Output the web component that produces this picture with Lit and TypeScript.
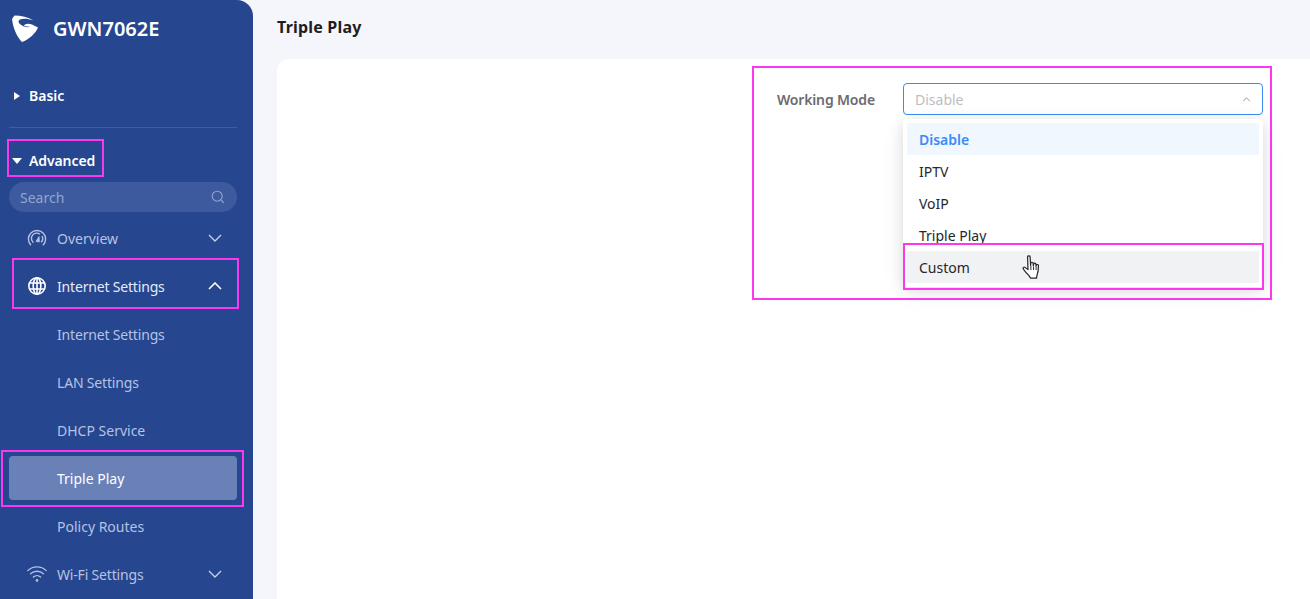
import { LitElement, html, css, svg } from "lit";
import { customElement } from "lit/decorators.js";

const chevDown = html`<svg class="chev" viewBox="0 0 14 8" width="14" height="8"><path d="M1 1l6 6 6-6" fill="none" stroke="currentColor" stroke-width="1.3"/></svg>`;
const chevUp = html`<svg class="chev up" viewBox="0 0 14 8" width="14" height="8"><path d="M1 7l6-6 6 6" fill="none" stroke="currentColor" stroke-width="1.6"/></svg>`;
const selChev = html`<svg class="chev" viewBox="0 0 10 6" width="9" height="5"><path d="M1 5l4-4 4 4" fill="none" stroke="currentColor" stroke-width="1.1"/></svg>`;

const gauge = html`<svg class="ico" viewBox="0 0 20 20" width="20" height="20" fill="none" stroke="currentColor" stroke-width="1.4">
  <path d="M4 17.2A8.6 8.6 0 1 1 16 17.2"/><path d="M6.5 14.6A5.2 5.2 0 0 1 13 6.2"/><path d="M15 8a5.2 5.2 0 0 1-.9 6.2"/><path d="M9 13.5l3-5 .4 5.4z" fill="currentColor" stroke-width=".8"/>
</svg>`;
const globe = html`<svg class="ico" viewBox="0 0 20 20" width="20" height="20" fill="none" stroke="currentColor" stroke-width="1.6">
  <circle cx="10" cy="10" r="8.2"/><ellipse cx="10" cy="10" rx="3.8" ry="8.2"/><path d="M2.4 7h15.2M2.4 13h15.2M10 1.8v16.4"/>
</svg>`;
const wifi = html`<svg class="ico" viewBox="0 0 20 20" width="20" height="20" fill="none" stroke="currentColor" stroke-width="1.3" stroke-linecap="round">
  <path d="M.8 6.6a13.4 13.4 0 0 1 18.4 0"/><path d="M3.6 9.8a9.3 9.3 0 0 1 12.8 0"/><path d="M6.4 13a5.2 5.2 0 0 1 7.2 0"/><circle cx="10" cy="16.4" r="1.3" fill="currentColor" stroke="none"/>
</svg>`;

const magnifier = html`<svg viewBox="0 0 14 14" width="14" height="14" fill="none" stroke="currentColor" stroke-width="1.1"><circle cx="6.2" cy="6.2" r="5"/><path d="M10 10l2.600 2.600" stroke-linecap="round"/></svg>`;

const logo = svg`<path d="M0 4L2.500 .5C9 .5 16 2 21.500 5.500 16 3.500 11 3 8 4.500 6 5.500 6 7.500 8.500 9.500 11 11.500 14 12.500 18.500 12L12 11C12.500 9 16 8 20 9.500L26 12.500C24 18 17 24.500 10 27 5 22 1 13 0 4Z" fill="#fff"/>`;

const hand = html`<svg class="hand" viewBox="0 0 18 25" width="20" height="25" preserveAspectRatio="none">
  <path d="M5 1.800c.1-1.200 2.200-1.200 2.300 0l.4 8.600.3-2.400c.2-1.100 1.900-1 2 .1l.2 2.600.4-1.900c.3-1 1.800-.9 1.900.2l.1 2.200.5-1.100c.4-.9 1.700-.6 1.700.4 0 3.200-.2 6.400-1 8.600-.4 1.200-.6 2.600-.7 4H7.600c-.6-2-2.300-3.600-3.900-5.500-1.100-1.300-2.100-2.800-2.700-4-.4-1 .8-1.900 1.700-1.200l2.700 2.300z" fill="#fff" stroke="#26262b" stroke-width="1.100" stroke-linejoin="round"/>
  <path d="M8 15v-4.200M10.400 15v-3.700M12.700 15v-3.200" stroke="#26262b" stroke-width=".9" fill="none"/>
</svg>`;

@customElement("app-root")
export class AppRoot extends LitElement {
  static styles = css`
    :host {
      display: flex;
      position: relative;
      width: 1310px;
      height: 599px;
      overflow: hidden;
      background: #f4f6fb;
      font-family: "Noto Sans", "Open Sans", sans-serif;
      font-size: 14px;
      color: #26262b;
    }
    .side {
      flex: 0 0 253px;
      box-sizing: border-box;
      background: #26468f;
      border-top-right-radius: 16px;
      padding: 0 16px 0 9px;
      color: #fff;
    }
    .brand {
      display: flex;
      align-items: center;
      gap: 15px;
      height: 56px;
      margin-left: 3px;
      padding-top: 1px;
      box-sizing: border-box;
    }
    .brand svg { flex: none; margin-right: -1px; }
    .brand span { font-size: 20px; font-weight: 600; line-height: 24px; }
    .group {
      display: flex;
      align-items: center;
      font-weight: 600;
      line-height: 20px;
      height: 20px;
    }
    .group.basic { margin-top: 30px; }
    .rule { height: 1px; background: #3c5ea6; margin-top: 21px; }
    .group.adv { margin-top: 23px; letter-spacing: -0.1px; }
    .tri-r {
      width: 0;
      height: 0;
      border-left: 6px solid #fff;
      border-top: 4.500px solid transparent;
      border-bottom: 4.500px solid transparent;
      margin: 0 9px 0 5px;
    }
    .tri-d {
      width: 0;
      height: 0;
      border-top: 6px solid #fff;
      border-left: 5px solid transparent;
      border-right: 5px solid transparent;
      margin: 0 7px 0 3px;
    }
    .search {
      display: flex;
      align-items: center;
      justify-content: space-between;
      height: 30px;
      margin-top: 11px;
      padding: 0 12px 0 11px;
      border-radius: 15px;
      background: #3e5a9e;
      color: #93a5cd;
    }
    .search svg { color: #93a5cd; }
    .nav { margin: 4px 0 0; padding: 0; list-style: none; }
    .row {
      display: flex;
      align-items: center;
      height: 44px;
      margin: 4px 0;
      padding: 0 15px 0 18px;
      border-radius: 4px;
      color: #b5c3e2;
    }
    .row:first-child { margin-top: 0; }
    .row .ico { flex: none; margin-right: 10px; }
    .row .chev { margin-left: auto; color: #c9d3e9; }
    .row.sub { padding-left: 48px; }
    .row.open { color: #e6ebf6; }
    .row.open .ico, .row.open .chev { color: #fff; }
    .row.active { background: #6a81b8; color: #fff; }
    .tight { letter-spacing: -0.18px; }
    main {
      flex: 1;
      min-width: 0;
      padding-left: 24px;
      display: flex;
      flex-direction: column;
    }
    h1 {
      margin: 0;
      height: 59px;
      padding-top: 15px;
      box-sizing: border-box;
      font-size: 16px;
      line-height: 24px;
      font-weight: 700;
      letter-spacing: 0.2px;
      color: #1d1d22;
    }
    .card {
      flex: 1;
      background: #fff;
      border-radius: 12px 0 0 0;
      padding: 24px 47px 0 0;
      display: flex;
      justify-content: flex-end;
      align-items: flex-start;
    }
    .field { display: flex; align-items: flex-start; gap: 28px; }
    .field label { color: #6b6b70; font-weight: 600; height: 32px; line-height: 34px; letter-spacing: -0.15px; }
    .select {
      position: relative;
      box-sizing: border-box;
      width: 360px;
      height: 32px;
      display: flex;
      align-items: center;
      justify-content: space-between;
      padding: 0 11px 0 11px;
      border: 1px solid #3a8bf5;
      border-radius: 4px;
      color: #bdbdc2;
      background: #fff;
    }
    .select > .chev { color: #8a8a90; }
    .menu {
      position: absolute;
      left: -1px;
      top: 35px;
      width: 360px;
      box-sizing: border-box;
      padding: 4px;
      background: #fff;
      border-radius: 4px;
      box-shadow: 0 3px 14px rgba(0, 0, 0, 0.12), 0 6px 28px rgba(0, 0, 0, 0.05);
      color: #26262b;
    }
    .opt {
      height: 32px;
      display: flex;
      align-items: center;
      padding: 0 12px;
      border-radius: 2px;
      position: relative;
    }
    .opt.sel { background: #f0f7fe; color: #3a8bf5; font-weight: 600; }
    .opt.hov { background: #f1f2f4; }
    .hand { position: absolute; left: 115px; top: 4px; }
    .mark { position: absolute; box-sizing: border-box; border: 2px solid #fb37f0; pointer-events: none; }
  `;

  private marks = [
    [7, 139, 97, 38],
    [12, 258, 227, 51],
    [1, 450, 243, 57],
    [752, 66, 520, 234],
    [903, 243, 361, 47],
  ];

  render() {
    return html`
      <aside class="side">
        <div class="brand">
          <svg viewBox="0 0 27 27" width="27" height="27">${logo}</svg>
          <span>GWN7062E</span>
        </div>
        <div class="group basic"><i class="tri-r"></i>Basic</div>
        <div class="rule"></div>
        <div class="group adv"><i class="tri-d"></i>Advanced</div>
        <div class="search"><span>Search</span>${magnifier}</div>
        <ul class="nav">
          <li class="row">${gauge}Overview${chevDown}</li>
          <li class="row open">${globe}<span class="tight">Internet Settings</span>${chevUp}</li>
          <li class="row sub"><span class="tight">Internet Settings</span></li>
          <li class="row sub"><span class="tight">LAN Settings</span></li>
          <li class="row sub">DHCP Service</li>
          <li class="row sub active">Triple Play</li>
          <li class="row sub">Policy Routes</li>
          <li class="row">${wifi}<span class="tight">Wi-Fi Settings</span>${chevDown}</li>
        </ul>
      </aside>
      <main>
        <h1>Triple Play</h1>
        <section class="card">
          <div class="field">
            <label>Working Mode</label>
            <div class="select">
              <span>Disable</span>${selChev}
              <div class="menu">
                <div class="opt sel">Disable</div>
                <div class="opt">IPTV</div>
                <div class="opt">VoIP</div>
                <div class="opt">Triple Play</div>
                <div class="opt hov">Custom${hand}</div>
              </div>
            </div>
          </div>
        </section>
      </main>
      ${this.marks.map(
        ([x, y, w, h]) =>
          html`<div class="mark" style="left:${x}px;top:${y}px;width:${w}px;height:${h}px"></div>`
      )}
    `;
  }
}
